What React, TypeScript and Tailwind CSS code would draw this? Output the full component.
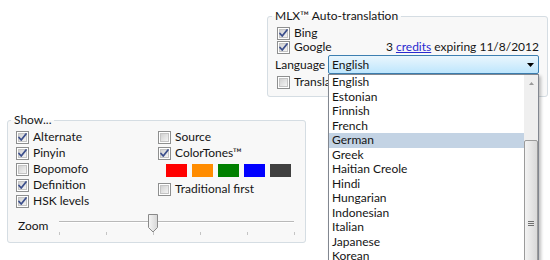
import React from "react";

const LANGUAGES = [
  "English",
  "Estonian",
  "Finnish",
  "French",
  "German",
  "Greek",
  "Haitian Creole",
  "Hindi",
  "Hungarian",
  "Indonesian",
  "Italian",
  "Japanese",
  "Korean",
  "Latvian",
];

const SWATCHES = ["bg-[#ff0000]", "bg-[#ff8c00]", "bg-[#008000]", "bg-[#0000ff]", "bg-[#404040]"];

/** Windows 7 style 13px checkbox. */
function CheckBox({ checked }: { checked?: boolean }) {
  return (
    <svg width="13" height="13" viewBox="0 0 13 13" className="shrink-0">
      <defs>
        <linearGradient id="cbfill" x1="0" y1="0" x2="1" y2="1">
          <stop offset="0" stopColor="#cfcfcf" />
          <stop offset="1" stopColor="#f6f6f6" />
        </linearGradient>
      </defs>
      <rect x="0.5" y="0.5" width="12" height="12" fill="#fff" stroke="#8e8f8f" />
      <rect x="2.5" y="2.5" width="8" height="8" fill="url(#cbfill)" stroke="#c4c4c4" />
      {checked && (
        <path
          d="M3 6.5 L5.2 9 L10 3"
          fill="none"
          stroke="#3c4f8c"
          strokeWidth="1.8"
          strokeLinecap="round"
          strokeLinejoin="round"
        />
      )}
    </svg>
  );
}

function CheckRow({ label, checked }: { label: string; checked?: boolean }) {
  return (
    <div className="flex h-[16px] items-center gap-[4px]">
      <CheckBox checked={checked} />
      <span>{label}</span>
    </div>
  );
}

function Slider() {
  const ticks = [2, 49, 96, 143, 190, 237];
  return (
    <svg width="240" height="26" viewBox="0 0 240 26">
      <defs>
        <linearGradient id="thumb" x1="0" y1="0" x2="1" y2="0">
          <stop offset="0" stopColor="#f6f6f6" />
          <stop offset="1" stopColor="#d6d6d6" />
        </linearGradient>
      </defs>
      <line x1="2" y1="9.5" x2="237" y2="9.5" stroke="#b9b9b9" />
      <line x1="2" y1="10.5" x2="237" y2="10.5" stroke="#ffffff" />
      {ticks.map((x) => (
        <line key={x} x1={x + 0.5} y1="20" x2={x + 0.5} y2="23" stroke="#c4c4c4" />
      ))}
      <path d="M91.5 2.5 H100.5 V15.5 L96 20 L91.5 15.5 Z" fill="url(#thumb)" stroke="#8a8a8a" />
    </svg>
  );
}

function Cursor() {
  return (
    <svg width="13" height="20" viewBox="0 0 13 20" className="absolute left-[415px] top-[142px]">
      <path
        d="M0.5 0.5 L0.5 16 L4.2 12.4 L6.8 18.6 L9 17.6 L6.5 11.6 L11.5 11.6 Z"
        fill="#fff"
        stroke="#000"
        strokeLinejoin="round"
      />
    </svg>
  );
}

function LanguageSelect() {
  return (
    <div className="relative ml-auto h-[19px] w-[211px]">
      <div className="flex h-full items-center justify-between rounded-[2px] border border-[#3c7fb1] bg-gradient-to-b from-[#eaf6fd] to-[#bee6fd] pl-[3px] pr-[4px]">
        <span>English</span>
        <svg width="7" height="4" viewBox="0 0 7 4">
          <path d="M0 0 H7 L3.5 4 Z" fill="#000" />
        </svg>
      </div>
      <div className="absolute left-0 top-full z-10 flex h-[200px] w-[211px] border border-[#828790] bg-white shadow-[2px_2px_3px_rgba(0,0,0,0.25)]">
        <ul className="flex-1">
          {LANGUAGES.map((lang) => (
            <li
              key={lang}
              className={`flex h-[14.5px] items-center pl-[3px] ${
                lang === "German" ? "bg-[#c3d3e4]" : ""
              }`}
            >
              {lang}
            </li>
          ))}
        </ul>
        <div className="flex w-[14px] flex-col bg-[#efefef]">
          <div className="flex h-[17px] items-center justify-center">
            <svg width="5" height="3" viewBox="0 0 5 3">
              <path d="M0 3 L2.5 0 L5 3 Z" fill="#9a9a9a" />
            </svg>
          </div>
          <div className="mt-[48px] flex flex-1 items-start justify-center rounded-[2px] border border-[#9b9b9b] bg-gradient-to-r from-[#f3f3f3] to-[#d9d9d9] pt-[80px]">
            <div className="flex flex-col gap-[1px]">
              <div className="h-px w-[6px] bg-[#707070]" />
              <div className="h-px w-[6px] bg-[#707070]" />
              <div className="h-px w-[6px] bg-[#707070]" />
            </div>
          </div>
        </div>
      </div>
    </div>
  );
}

export default function App() {
  return (
    <div
      className="relative h-[260px] w-[550px] overflow-hidden bg-white text-[12px] leading-[14px] text-[#151515]"
      style={{ fontFamily: 'Lato, "Noto Sans", sans-serif' }}
    >
      <fieldset className="ml-[267px] mt-[8px] w-[281px] rounded-[3px] border border-[#d5dde3] bg-[#f8f8f8] pb-[7px] pl-[7px] pr-[8px]">
        <legend className="-ml-[3px] px-[3px] leading-[16px]">MLX™ Auto-translation</legend>
        <div className="ml-[2px] mt-[2px] flex h-[14px] items-center gap-[4px]">
          <CheckBox checked />
          <span>Bing</span>
        </div>
        <div className="flex h-[14px] items-center justify-between">
          <div className="ml-[2px] flex items-center gap-[4px]">
            <CheckBox checked />
            <span>Google</span>
          </div>
          <span>
            3{" "}
            <a href="#" className="text-[#2a2ad0] underline">
              credits
            </a>{" "}
            expiring 11/8/2012
          </span>
        </div>
        <div className="mt-[1px] flex h-[19px] items-center">
          <span>Language</span>
          <LanguageSelect />
        </div>
        <div className="ml-[2px] mt-[1px] flex h-[14px] items-center gap-[4px]">
          <CheckBox />
          <span>Translate automatically</span>
        </div>
      </fieldset>

      <fieldset className="ml-[7px] mt-[15px] w-[296px] rounded-[3px] border border-[#d5dde3] bg-[#f8f8f8] pl-[8px] pr-[8px] pt-[1px]">
        <legend className="-ml-[5px] px-[3px] leading-[16px]">Show...</legend>
        <div className="grid grid-cols-[142px_1fr]">
          <div>
            <CheckRow label="Alternate" checked />
            <CheckRow label="Pinyin" checked />
            <CheckRow label="Bopomofo" />
            <CheckRow label="Definition" checked />
            <CheckRow label="HSK levels" checked />
          </div>
          <div>
            <CheckRow label="Source" />
            <CheckRow label="ColorTones™" checked />
            <div className="ml-[8px] mt-[3px] flex h-[13px] gap-[5px]">
              {SWATCHES.map((c) => (
                <div key={c} className={`h-[13px] w-[21px] ${c}`} />
              ))}
            </div>
            <div className="mt-[4px]">
              <CheckRow label="Traditional first" />
            </div>
          </div>
        </div>
        <div className="mt-[3px] flex h-[30px] items-start">
          <span className="ml-[2px] mt-[7px] w-[39px]">Zoom</span>
          <Slider />
        </div>
      </fieldset>

      <Cursor />
    </div>
  );
}
